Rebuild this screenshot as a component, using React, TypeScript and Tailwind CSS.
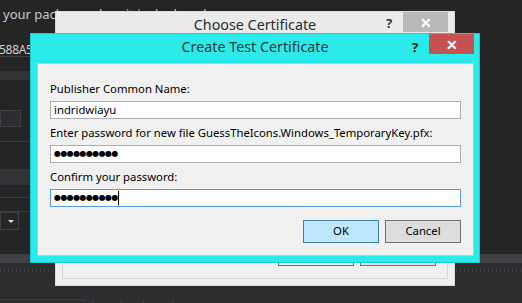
const ui = "font-['Noto_Sans',sans-serif]";

function Dots({ n }: { n: number }) {
  return (
    <span className="font-['DejaVu_Sans',sans-serif] text-[8px] tracking-[-0.6px] leading-none text-black">
      {"●".repeat(n)}
    </span>
  );
}

function Field({ children, focus }: { children?: React.ReactNode; focus?: boolean }) {
  return (
    <div
      className={`h-[18px] bg-white border flex items-center px-[3px] ${
        focus ? "border-[#569de5]" : "border-[#abadb3]"
      }`}
    >
      {children}
    </div>
  );
}

function Label({ text }: { text: string }) {
  return <div className="h-[16px] leading-[16px] text-[11.3px] text-black whitespace-nowrap">{text}</div>;
}

export default function App() {
  return (
    <div className={`relative w-[522px] h-[303px] overflow-hidden bg-[#252526] ${ui}`}>
      {/* IDE behind */}
      <div className="flex flex-col w-full h-full">
        <div className="h-[34px] pl-[3px] pt-[5px] text-[13px] text-[#c8c8c8] whitespace-nowrap">
          your package when it is deployed.
        </div>
        <div className="h-[10px]" />
        <div className="h-[13px] w-[200px] border-b border-[#3f3f46] text-[12px] leading-[12px] text-[#d0d0d0] tracking-[-0.3px] -ml-[1px]">
          588A5
        </div>
        <div className="h-[14px]" />
        <div className="h-[9px] w-[200px] bg-[#333337]" />
        <div className="h-[30px]" />
        <div className="flex gap-[9px]">
          <div className="w-[21px] h-[17px] border border-[#3f3f46] bg-[#2d2d30]" />
          <div className="w-[100px] h-[17px] border border-[#3f3f46]" />
        </div>
        <div className="h-[15px] w-[200px] border-b border-[#3a3a3e]" />
        <div className="h-[27px]" />
        <div className="h-[16px] w-[200px] bg-[#333337]" />
        <div className="h-[13px] w-[200px] border-b border-[#3a3a3e]" />
        <div className="h-[14px] w-[200px] border-b border-[#3a3a3e]" />
        <div className="flex items-center gap-[11px]">
          <div className="w-[19px] h-[18px] border border-[#3f3f46] flex items-center justify-end pr-[4px]">
            <div className="w-0 h-0 border-l-[3px] border-r-[3px] border-t-[3px] border-l-transparent border-r-transparent border-t-[#e0e0e0]" />
          </div>
          <div className="w-[3px] h-[8px] bg-[#3f8ee0]" />
        </div>
        <div className="h-[24px]" />
        <div className="h-[9px] bg-[#3f3f46]" />
        <div className="h-[6px] bg-[#2d2d30]" />
        <div className="h-[1px] bg-[repeating-linear-gradient(90deg,#4a4a4f_0_1px,transparent_1px_4px)] bg-[#2d2d30]" />
        <div className="h-[1px] bg-[#2d2d30]" />
        <div className="h-[1px] bg-[repeating-linear-gradient(90deg,#4a4a4f_0_1px,transparent_1px_4px)] bg-[#2d2d30]" />
        <div className="flex-1 bg-[#2d2d30] flex items-end">
          <div className="w-[85px] h-[4px] border-t border-r border-[#3f3f46]" />
          <div className="ml-[7px] w-[30px] h-[4px] border-l border-r border-[#3f3f46]" />
          <div className="ml-[21px] w-[30px] h-[4px] border-l border-r border-[#3f3f46]" />
        </div>
      </div>

      {/* Choose Certificate (back window) */}
      <div className="absolute left-[55px] top-[11px] w-[400px] h-[275px] bg-[#f0f0f0] border border-[#d9d9d9] flex flex-col">
        <div className="h-[22px] bg-[#ebebeb] flex items-start">
          <div className="flex-1 text-center text-[14.3px] leading-[26px] text-[#2b2b2b] pl-[68px]">Choose Certificate</div>
          <div className="w-[10px] text-[13px] font-bold leading-[22px] text-[#333] mr-[7px]">?</div>
          <div className="w-[45px] h-[20px] bg-[#b9b9b9] mr-[6px] flex items-center justify-center text-white text-[14px] font-bold">
            ✕
          </div>
        </div>
        <div className="flex-1 mx-[6px] mb-[6px] border border-[#d5d5d5] flex items-end justify-end gap-[6px] pr-[11px] pb-[12px]">
          <div className="w-[76px] h-[23px] border border-[#3c7fb1] bg-[#e5f1fb]" />
          <div className="w-[76px] h-[23px] border border-[#707070] bg-[#dddddd]" />
        </div>
      </div>

      {/* Create Test Certificate (front window) */}
      <div className="absolute left-[30px] top-[33px] w-[450px] h-[230px] bg-[#2aeaea] border border-[#1ec9c9] flex flex-col">
        <div className="h-[29px] flex items-start">
          <div className="flex-1 pl-[67px] text-center text-[14.3px] leading-[26px] text-[#2b3a3a]">Create Test Certificate</div>
          <div className="w-[14px] text-[13px] font-bold leading-[22px] text-[#222] mr-[3px] mt-[2px]">?</div>
          <div className="w-[45px] h-[20px] bg-[#c75050] mr-[5px] flex items-center justify-center text-white text-[14px] font-bold">
            ✕
          </div>
        </div>
        <div className="flex-1 ml-[6px] mr-[5px] mb-[6px] bg-[#f0f0f0] border border-[#9ad9d9] flex flex-col px-[12px] pt-[17px]">
          <Label text="Publisher Common Name:" />
          <div className="h-[4px]" />
          <Field>
            <span className="text-[11.3px] text-black leading-none">indridwiayu</span>
          </Field>
          <div className="h-[6px]" />
          <Label text="Enter password for new file GuessTheIcons.Windows_TemporaryKey.pfx:" />
          <div className="h-[4px]" />
          <Field>
            <Dots n={10} />
          </Field>
          <div className="h-[6px]" />
          <Label text="Confirm your password:" />
          <div className="h-[4px]" />
          <Field focus>
            <Dots n={10} />
            <span className="w-[1px] h-[14px] bg-black" />
          </Field>
          <div className="flex justify-end gap-[6px] mt-[13px]">
            <button className="w-[76px] h-[23px] border border-[#3c7fb1] bg-[#bee6fd] text-[11.3px] text-black">OK</button>
            <button className="w-[76px] h-[23px] border border-[#707070] bg-[#dddddd] text-[11.3px] text-black">Cancel</button>
          </div>
        </div>
      </div>
    </div>
  );
}
